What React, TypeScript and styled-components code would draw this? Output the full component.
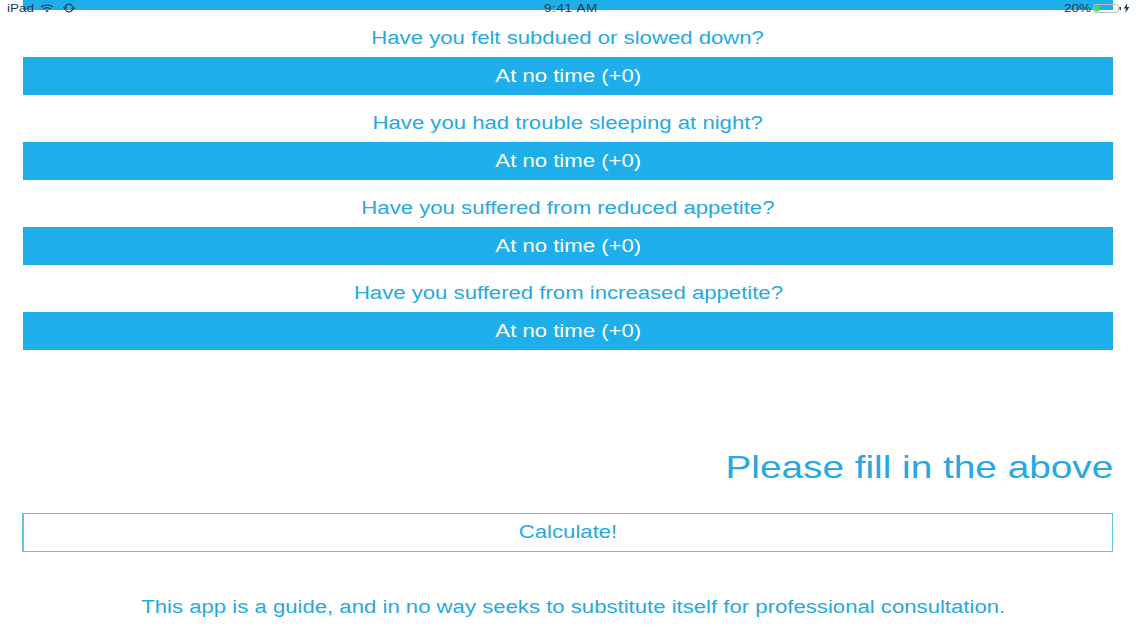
import React from "react";
import styled, { createGlobalStyle } from "styled-components";

const BLUE = "#1eaee9";
const TEXT_BLUE = "#26a9e0";
const STATUS = "#1f3a52";

const GlobalStyle = createGlobalStyle`
  html, body {
    margin: 0;
    padding: 0;
    background: #fff;
  }
  body {
    font-family: "Liberation Sans", Arial, sans-serif;
  }
`;

const Screen = styled("div")`
  position: relative;
  width: 1136px;
  height: 639px;
  overflow: hidden;
  background: #fff;
  padding: 0 23px;
  box-sizing: border-box;
  display: flex;
  flex-direction: column;
`;

// the whole screenshot is stretched sideways, so the glyphs are too
const Wide = styled("span")<{ $origin?: string }>`
  display: inline-block;
  white-space: nowrap;
  transform: scaleX(1.23);
  transform-origin: ${(p) => p.$origin || "center"};
`;

const StatusBar = styled("div")`
  position: absolute;
  top: 0;
  left: 0;
  right: 0;
  height: 16px;
  display: grid;
  grid-template-columns: 1fr auto 1fr;
  align-items: center;
  padding: 0 6px 0 7px;
  font-size: 11px;
  color: ${STATUS};
`;

const StatusLeft = styled("div")`
  display: flex;
  align-items: center;
  gap: 9px;

  & > span {
    margin-right: 2px;
  }
`;

const Clock = styled(Wide)`
  letter-spacing: 0.5px;
  margin-left: 4px;
`;

const StatusRight = styled("div")`
  display: flex;
  align-items: center;
  justify-content: flex-end;
  gap: 2px;
`;

const TopStrip = styled("div")`
  height: 10px;
  background: ${BLUE};
  flex: none;
`;

const Questions = styled("div")`
  display: flex;
  flex-direction: column;
  margin-top: 12px;
`;

const QuestionBlock = styled("div")`
  display: flex;
  flex-direction: column;
  height: 85px;
`;

const QuestionText = styled("div")`
  height: 35px;
  line-height: 32px;
  text-align: center;
  font-size: 18px;
  color: ${TEXT_BLUE};
`;

const AnswerBar = styled("div")`
  height: 38px;
  line-height: 38px;
  text-align: center;
  font-size: 18px;
  color: #fff;
  background: ${BLUE};
`;

const Notice = styled("div")`
  margin-top: 85px;
  text-align: right;
  font-size: 31.5px;
  line-height: 40px;
  color: ${TEXT_BLUE};
`;

const CalculateButton = styled("div")`
  margin: 26px 0 0 -1px;
  height: 39px;
  box-sizing: border-box;
  border: 1px solid #5fc3ec;
  border-left-width: 2px;
  text-align: center;
  line-height: 36px;
  font-size: 18px;
  color: ${TEXT_BLUE};
`;

const Disclaimer = styled("div")`
  margin-top: 44px;
  padding-left: 10px;
  text-align: center;
  font-size: 18px;
  line-height: 22px;
  color: ${TEXT_BLUE};
`;

const questions = [
  "Have you felt subdued or slowed down?",
  "Have you had trouble sleeping at night?",
  "Have you suffered from reduced appetite?",
  "Have you suffered from increased appetite?",
];

const Wifi = () => (
  <svg width="14" height="9" viewBox="0 0 14 9" fill="none" stroke={STATUS} strokeWidth="1.1">
    <path d="M1 3 C4.5 0.4 9.5 0.4 13 3" />
    <path d="M3.2 5 C5.4 3.4 8.6 3.4 10.8 5" />
    <path d="M7 8.6 L5.2 6.6 C6.2 6 7.8 6 8.8 6.6 Z" fill={STATUS} stroke="none" />
  </svg>
);

const Sync = () => (
  <svg width="12" height="10" viewBox="0 0 12 10" fill="none" stroke={STATUS} strokeWidth="1.1">
    <path d="M2 5 A4 4 0 0 1 9.6 3.4" />
    <path d="M10 5 A4 4 0 0 1 2.4 6.6" />
    <path d="M0.4 4 L2 5.8 L3.6 4" />
    <path d="M8.4 6 L10 4.2 L11.6 6" />
  </svg>
);

const Battery = () => (
  <svg width="28" height="9" viewBox="0 0 28 9">
    <rect x="0.5" y="0.5" width="25" height="8" rx="2" fill="none" stroke="#b4bec6" />
    <rect x="1.5" y="1.5" width="5" height="6" rx="1" fill="#4cd964" />
    <rect x="26.5" y="3" width="1.5" height="3" fill={STATUS} />
  </svg>
);

const Bolt = () => (
  <svg width="7" height="10" viewBox="0 0 7 10">
    <path d="M4.4 0 L0.6 5.6 H3 L2.4 10 L6.4 4 H3.8 Z" fill={STATUS} />
  </svg>
);

export default function App() {
  return (
    <>
      <GlobalStyle />
      <Screen>
        <TopStrip />
        <StatusBar>
          <StatusLeft>
            <Wide $origin="left">iPad</Wide>
            <Wifi />
            <Sync />
          </StatusLeft>
          <Clock>9:41 AM</Clock>
          <StatusRight>
            <Wide $origin="right">20%</Wide>
            <Battery />
            <Bolt />
          </StatusRight>
        </StatusBar>
        <Questions>
          {questions.map((q) => (
            <QuestionBlock key={q}>
              <QuestionText>
                <Wide>{q}</Wide>
              </QuestionText>
              <AnswerBar>
                <Wide>At no time (+0)</Wide>
              </AnswerBar>
            </QuestionBlock>
          ))}
        </Questions>
        <Notice>
          <Wide $origin="right">Please fill in the above</Wide>
        </Notice>
        <CalculateButton>
          <Wide>Calculate!</Wide>
        </CalculateButton>
        <Disclaimer>
          <Wide>This app is a guide, and in no way seeks to substitute itself for professional consultation.</Wide>
        </Disclaimer>
      </Screen>
    </>
  );
}
